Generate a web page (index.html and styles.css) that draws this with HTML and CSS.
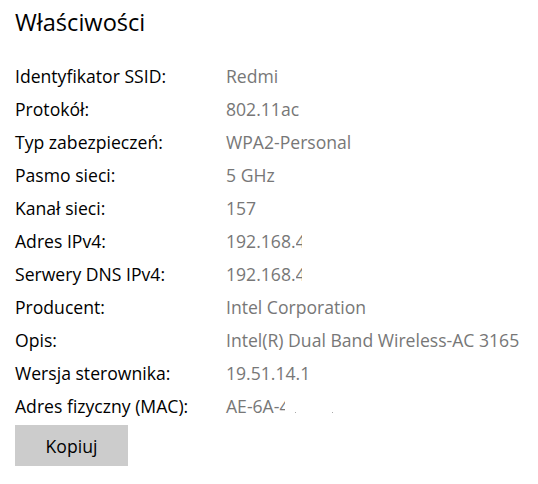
FILE: index.html
```html
<!DOCTYPE html>
<html lang="pl">
<head>
<meta charset="utf-8">
<link rel="stylesheet" href="styles.css">
</head>
<body>
<div class="panel">
  <h1 class="title">Właściwości</h1>
  <div class="props">
    <div class="label">Identyfikator SSID:</div><div class="value">Redmi</div>
    <div class="label">Protokół:</div><div class="value">802.11ac</div>
    <div class="label">Typ zabezpieczeń:</div><div class="value">WPA2-Personal</div>
    <div class="label">Pasmo sieci:</div><div class="value">5 GHz</div>
    <div class="label">Kanał sieci:</div><div class="value">157</div>
    <div class="label">Adres IPv4:</div><div class="value">192.168.<span class="cut">4</span></div>
    <div class="label">Serwery DNS IPv4:</div><div class="value">192.168.<span class="cut">4</span></div>
    <div class="label">Producent:</div><div class="value">Intel Corporation</div>
    <div class="label">Opis:</div><div class="value">Intel(R) Dual Band Wireless-AC 3165</div>
    <div class="label">Wersja sterownika:</div><div class="value">19.51.14.1</div>
    <div class="label">Adres fizyczny (MAC):</div><div class="value">AE-6A-<span class="cut">4</span><span class="dot d1"></span><span class="dot d2"></span></div>
  </div>
  <button class="btn">Kopiuj</button>
</div>
</body>
</html>
```
FILE: styles.css
```css
html, body {
  margin: 0;
  padding: 0;
  background: #ffffff;
}
body {
  font-family: "Open Sans", "Noto Sans", sans-serif;
  color: #000;
}
.panel {
  padding: 4px 15px 0 15px;
}
.title {
  margin: 0;
  font-size: 23.6px;
  font-weight: 400;
  line-height: 36px;
  color: #000;
}
.props {
  display: grid;
  grid-template-columns: 211px auto;
  grid-auto-rows: 33px;
  align-items: center;
  margin-top: 19.5px;
  font-size: 17.6px;
}
.label {
  color: #000;
  white-space: nowrap;
}
.value {
  color: #777;
  white-space: nowrap;
}
.cut {
  display: inline-block;
  width: 6px;
  overflow: hidden;
  vertical-align: bottom;
}
.dot {
  display: inline-block;
  width: 1px;
  height: 1px;
  background: #aaa;
  vertical-align: baseline;
}
.d1 { margin-left: 10px; }
.d2 { margin-left: 36px; }
.btn {
  display: block;
  margin-top: 2.5px;
  width: 113px;
  height: 41px;
  border: none;
  background: #cccccc;
  font-family: inherit;
  font-size: 17.6px;
  color: #000;
  padding: 0;
}
```
